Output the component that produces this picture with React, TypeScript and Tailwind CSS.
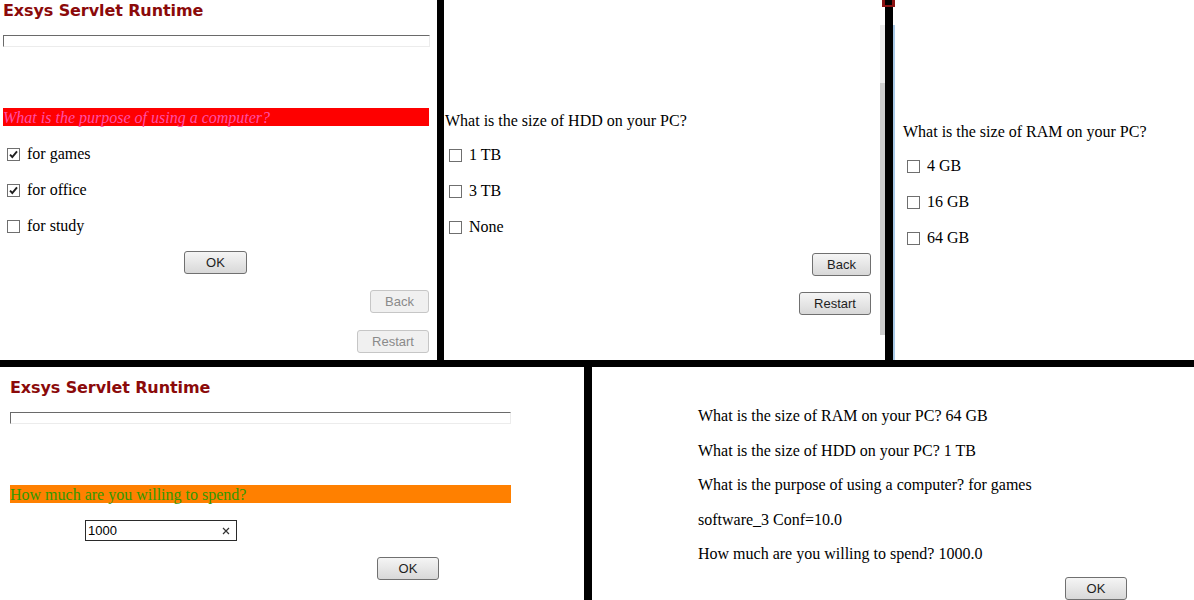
import React from 'react';

const serif = "font-['Liberation_Serif',_'Times_New_Roman',_serif]";

function Btn({ label, w, disabled }: { label: string; w: string; disabled?: boolean }) {
  return (
    <button
      className={`block ${w} h-[23px] rounded-[3px] border font-['Liberation_Sans',_Arial,_sans-serif] text-[13px] leading-none ${
        disabled
          ? 'border-[#c6c6c6] bg-[#f0f0f0] text-[#8a8a8a]'
          : 'border-[#707070] bg-linear-to-b from-[#f5f5f5] to-[#d8d8d8] text-[#1e1e1e]'
      }`}
    >
      {label}
    </button>
  );
}

function Check({ checked }: { checked?: boolean }) {
  return (
    <span className="w-[13px] h-[13px] border border-[#6f6f6f] bg-white flex items-center justify-center shrink-0">
      {checked && (
        <svg width="11" height="11" viewBox="0 0 11 11">
          <path d="M2 5.6 L4.3 8 L9 2.4" fill="none" stroke="#1f1f1f" strokeWidth="1.9" />
        </svg>
      )}
    </span>
  );
}

function Option({ label, checked }: { label: string; checked?: boolean }) {
  return (
    <div className="h-[36px] flex items-center pl-[4px]">
      <Check checked={checked} />
      <span className={`${serif} text-[16px] leading-[20px] text-black ml-[7px]`}>{label}</span>
    </div>
  );
}

function Title() {
  return (
    <div className="font-['DejaVu_Sans',_Verdana,_sans-serif] font-bold text-[16px] leading-[20px] tracking-[-0.1px] text-[#8b0a0a]">
      Exsys Servlet Runtime
    </div>
  );
}

function Progress({ w }: { w: string }) {
  return <div className={`${w} h-[12px] mt-[14px] border border-t-[#6a6a6a] border-l-[#6a6a6a] border-b-[#ececec] border-r-[#ececec]`} />;
}

export default function App() {
  return (
    <div className="w-[1194px] h-[600px] bg-white overflow-hidden flex flex-col">
      {/* top row */}
      <div className="relative flex h-[361px]">
        {/* panel 1 */}
        <div className="w-[437px] pl-[3px] pt-[1px]">
          <Title />
          <Progress w="w-[427px]" />
          <div className={`w-[426px] h-[18px] mt-[61px] pt-[1px] bg-[#fe0000] ${serif} italic text-[16px] leading-[17px] text-[#ff4fa7]`}>
            What is the purpose of using a computer?
          </div>
          <div className="mt-[10px]">
            <Option label="for games" checked />
            <Option label="for office" checked />
            <Option label="for study" />
          </div>
          <div className="w-[425px] flex justify-center mt-[7px]">
            <Btn label="OK" w="w-[63px]" />
          </div>
          <div className="w-[426px] flex flex-col items-end">
            <div className="mt-[16px]">
              <Btn label="Back" w="w-[59px]" disabled />
            </div>
            <div className="mt-[17px]">
              <Btn label="Restart" w="w-[72px]" disabled />
            </div>
          </div>
        </div>

        <div className="w-[7px] bg-black" />

        {/* panel 2 */}
        <div className="w-[441px] flex">
          <div className="flex-1 pl-[1px] pr-[9px] pt-[111px]">
            <div className={`${serif} text-[16px] leading-[20px] text-black`}>What is the size of HDD on your PC?</div>
            <div className="mt-[6px]">
              <Option label="1 TB" />
              <Option label="3 TB" />
              <Option label="None" />
            </div>
            <div className="flex flex-col items-end">
              <div className="mt-[8px]">
                <Btn label="Back" w="w-[59px]" />
              </div>
              <div className="mt-[16px]">
                <Btn label="Restart" w="w-[72px]" />
              </div>
            </div>
          </div>
          <div className="w-[5px] flex flex-col">
            <div className="mt-[25px] h-[58px] bg-[#ececec]" />
            <div className="h-[252px] bg-[#cdcdcd]" />
          </div>
        </div>

        <div className="w-[8px] bg-black" />

        {/* panel 3 */}
        <div className="flex-1 flex">
          <div className="w-[2px] mt-[25px] bg-[#a9c9e6]" />
          <div className="flex-1 pl-[8px] pt-[122px]">
            <div className={`${serif} text-[16px] leading-[20px] text-black`}>What is the size of RAM on your PC?</div>
            <div className="mt-[6px]">
              <Option label="4 GB" />
              <Option label="16 GB" />
              <Option label="64 GB" />
            </div>
          </div>
        </div>

        {/* small red window control peeking over the divider */}
        <div className="absolute left-[882px] top-0 w-[13px] h-[7px] border-x-[3px] border-b-[2px] border-[#8b1414]" />
      </div>

      <div className="h-[7px] bg-black" />

      {/* bottom row */}
      <div className="flex flex-1">
        {/* panel 4 */}
        <div className="w-[584px] pl-[10px] pt-[11px]">
          <Title />
          <Progress w="w-[501px]" />
          <div className={`w-[501px] h-[18px] mt-[61px] pt-[1px] bg-[#ff8000] ${serif} text-[16px] leading-[17px] text-[#339900]`}>
            How much are you willing to spend?
          </div>
          <div className="ml-[75px] mt-[17px] w-[152px] h-[21px] border border-[#2a2a2a] flex items-center justify-between pl-[2px] pr-[6px]">
            <span className="font-['Liberation_Sans',_Arial,_sans-serif] text-[13px] text-black leading-none">1000</span>
            <svg width="8" height="8" viewBox="0 0 8 8">
              <path d="M1 1 L7 7 M7 1 L1 7" stroke="#333" strokeWidth="1.2" />
            </svg>
          </div>
          <div className="ml-[367px] mt-[16px]">
            <Btn label="OK" w="w-[62px]" />
          </div>
        </div>

        <div className="w-[8px] bg-black" />

        {/* panel 5 */}
        <div className={`flex-1 pt-[39px] ${serif} text-[16px] leading-[20px] text-black`}>
          <div className="pl-[106px] flex flex-col gap-[14.5px]">
            <div>What is the size of RAM on your PC? 64 GB</div>
            <div>What is the size of HDD on your PC? 1 TB</div>
            <div>What is the purpose of using a computer? for games</div>
            <div>software_3 Conf=10.0</div>
            <div>How much are you willing to spend? 1000.0</div>
          </div>
          <div className="ml-[473px] mt-[13px]">
            <Btn label="OK" w="w-[62px]" />
          </div>
        </div>
      </div>
    </div>
  );
}
